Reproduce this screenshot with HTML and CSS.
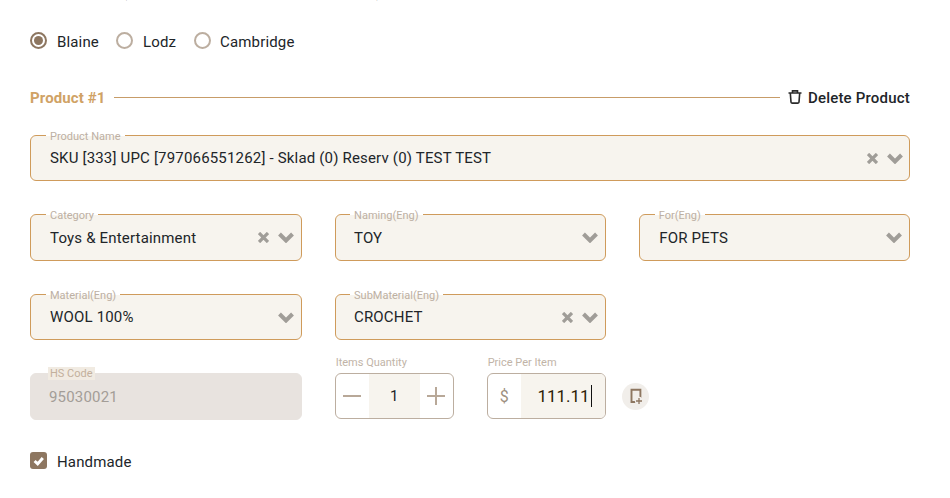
FILE: index.html
```html
<!DOCTYPE html>
<html lang="en">
<head>
<meta charset="utf-8">
<title>Product form</title>
<link rel="stylesheet" href="styles.css">
</head>
<body>
<main class="form">
  <div class="clipped-note"><span class="clipped-text">Sample from (by warehouse with shipping location)</span></div>
  <div class="radios">
    <label class="opt"><span class="radio on"></span>Blaine</label>
    <label class="opt"><span class="radio"></span>Lodz</label>
    <label class="opt"><span class="radio"></span>Cambridge</label>
  </div>
  <div class="prod-head">
    <span class="prod-title">Product #1</span>
    <span class="prod-line"></span>
    <span class="delete">
      <svg class="trash" viewBox="0 0 14 14" width="14" height="14"><path d="M.5 3h13M4.500 3V.9h5V3M2.300 3l.7 9.100c0 .6.400 1 1 1h6c.6 0 1-.4 1-1l.7-9.100" fill="none" stroke="#2b2b2b" stroke-width="1.600"/></svg>
      Delete Product
    </span>
  </div>
  <div class="row row-full">
    <div class="field"><span class="legend">Product Name</span><span class="val">SKU [333] UPC [797066551262] - Sklad (0) Reserv (0) TEST TEST</span>
      <svg class="x" viewBox="0 0 11 11"><path d="M1 1l9 9M10 1l-9 9"/></svg><svg class="chev" viewBox="0 0 16 11"><path d="M1.500 2L8 8.500 14.500 2"/></svg></div>
  </div>
  <div class="row grid3">
    <div class="field"><span class="legend">Category</span><span class="val">Toys &amp; Entertainment</span>
      <svg class="x" viewBox="0 0 11 11"><path d="M1 1l9 9M10 1l-9 9"/></svg><svg class="chev" viewBox="0 0 16 11"><path d="M1.500 2L8 8.500 14.500 2"/></svg></div>
    <div class="field"><span class="legend">Naming(Eng)</span><span class="val">TOY</span>
      <svg class="chev" viewBox="0 0 16 11"><path d="M1.500 2L8 8.500 14.500 2"/></svg></div>
    <div class="field"><span class="legend">For(Eng)</span><span class="val">FOR PETS</span>
      <svg class="chev" viewBox="0 0 16 11"><path d="M1.500 2L8 8.500 14.500 2"/></svg></div>
  </div>
  <div class="row grid3">
    <div class="field"><span class="legend">Material(Eng)</span><span class="val">WOOL 100%</span>
      <svg class="chev" viewBox="0 0 16 11"><path d="M1.500 2L8 8.500 14.500 2"/></svg></div>
    <div class="field"><span class="legend">SubMaterial(Eng)</span><span class="val">CROCHET</span>
      <svg class="x" viewBox="0 0 11 11"><path d="M1 1l9 9M10 1l-9 9"/></svg><svg class="chev" viewBox="0 0 16 11"><path d="M1.500 2L8 8.500 14.500 2"/></svg></div>
  </div>
  <div class="row grid3">
    <div class="field disabled"><span class="legend">HS Code</span><span class="val">95030021</span></div>
    <div class="pair">
      <div class="mini">
        <div class="mini-label">Items Quantity</div>
        <div class="stepper">
          <span class="step"><svg viewBox="0 0 18 18" width="18" height="18"><path d="M0 9h18" stroke="#b8a898" stroke-width="2"/></svg></span>
          <span class="qty">1</span>
          <span class="step"><svg viewBox="0 0 18 18" width="18" height="18"><path d="M0 9h18M9 0v18" stroke="#b8a898" stroke-width="2"/></svg></span>
        </div>
      </div>
      <div class="mini">
        <div class="mini-label">Price Per Item</div>
        <div class="price">
          <span class="cur">$</span>
          <span class="amount"><span class="amount-text">111.11</span><span class="caret"></span></span>
        </div>
      </div>
      <span class="copy">
        <svg viewBox="0 0 27 27" width="27" height="27"><path d="M15 19H9.500V6.800h8.900V15" fill="none" stroke="#8d7660" stroke-width="1.900"/><circle cx="17" cy="18" r="4.200" fill="#f1eeea"/><path d="M14 18h6M17 15v6" stroke="#8d7660" stroke-width="1.300"/></svg>
      </span>
    </div>
  </div>
  <label class="check-row"><span class="check"><svg viewBox="0 0 17 17" width="17" height="17"><path d="M4.600 9l3.100 2.900 5.100-5.800" fill="none" stroke="#fff" stroke-width="3"/></svg></span>Handmade</label>
</main>
</body>
</html>
```
FILE: styles.css
```css
* { box-sizing: border-box; }
html, body { margin: 0; height: 100%; overflow: hidden; background: #fff; }
body { font-family: Roboto, "Liberation Sans", sans-serif; color: #212529; font-size: 15px; }
.form { padding: 0 40px 0 30px; height: 498px; overflow: hidden; }
.clipped-note { height: 3px; overflow: hidden; }
.clipped-text { display: block; margin-top: -17px; font-size: 15px; line-height: 18px; letter-spacing: .2px; white-space: nowrap; }
.radios { display: flex; gap: 17px; margin-top: 30px; height: 18px; align-items: center; }
.opt { display: flex; align-items: center; gap: 10px; letter-spacing: .15px; line-height: 18px; }
.opt:last-child { gap: 9px; }
.opt:last-child .radio { margin-left: 1px; }
.radio { width: 17px; height: 17px; border-radius: 50%; border: 2px solid #bcaea0; background: #fff; position: relative; flex: none; margin-top: -4px; }
.radio.on { border-color: #8d7660; }
.radio.on::after { content: ""; position: absolute; inset: 2px; border-radius: 50%; background: #8d7660; }
.prod-head { display: flex; align-items: center; margin-top: 36px; height: 20px; }
.prod-title { color: #d0a265; font-weight: 700; font-size: 15px; letter-spacing: .1px; padding-top: 2px; }
.prod-line { flex: 1; height: 1px; background: #c79c68; margin: 0 8px 0 9px; }
.delete { display: flex; align-items: center; gap: 6px; font-weight: 500; font-size: 15px; letter-spacing: .2px; padding-top: 1px; }
.trash { margin-top: -2px; }
.row-full { margin-top: 27.750px; }
.row-full .field { padding-right: 6px; }
.grid3 { display: grid; grid-template-columns: 271.670px 271.670px 270.670px; column-gap: 33px; margin-top: 33px; }
.field { position: relative; height: 46.500px; background: #f7f4ee; border: 1px solid #cf9b5b; border-radius: 6px; display: flex; align-items: center; padding: 0 7px 0 19px; }
.field .legend { position: absolute; left: 15px; top: -5px; padding: 0 4px; font-size: 11px; line-height: 11px; color: #bdb0a3; background: linear-gradient(#fff 45%, #f7f4ee 45%); }
.grid3 .field:nth-child(2) { padding-left: 18.300px; }
.grid3 .field:nth-child(n+2) .legend { left: 14.400px; }
.val { flex: 1; white-space: nowrap; font-size: 15px; letter-spacing: .18px; }
.x, .chev { fill: none; stroke: #a09d98; flex: none; }
.x { width: 11px; height: 11px; stroke-width: 3.300; margin-right: 9px; }
.chev { width: 16px; height: 11px; stroke-width: 4; }
.disabled { background: #e8e3df; border-color: #e8e3df; padding-left: 18px; }
.disabled .val { color: #a39d97; }
.field.disabled .legend { background: #f1ebe2; color: #c3b09c; top: -7px; padding: 0 2px; left: 17px; line-height: 13px; }
.pair { display: flex; gap: 33px; align-items: flex-start; position: relative; margin-top: -17px; }
.mini-label { font-size: 11px; line-height: 13px; color: #c1b4a7; margin-bottom: 4px; padding-left: 1px; }
.stepper, .price { display: flex; height: 46px; width: 119px; border: 1px solid #bcaea0; border-radius: 6px; overflow: hidden; background: #fff; }
.step { width: 33px; display: flex; align-items: center; justify-content: center; }
.qty { flex: 1; background: #f7f4ee; display: flex; align-items: center; justify-content: center; font-size: 15px; }
.cur { width: 33px; display: flex; align-items: center; justify-content: center; color: #9d907f; font-size: 16px; }
.amount { flex: 1; background: #f7f4ee; display: flex; align-items: center; justify-content: flex-end; padding-right: 13px; font-size: 17px; color: #2d1c05; }
.caret { width: 1px; height: 22px; background: #111; margin-left: 1px; }
.copy { position: absolute; left: 287px; top: 27px; width: 27px; height: 27px; border-radius: 50%; background: #f1eeea; display: flex; }
.check-row { display: flex; align-items: center; gap: 10px; margin-top: 33px; line-height: 18px; letter-spacing: .15px; }
.check { width: 17px; height: 17px; border-radius: 3px; background: #8d7660; flex: none; display: flex; margin-top: -2px; }
```
